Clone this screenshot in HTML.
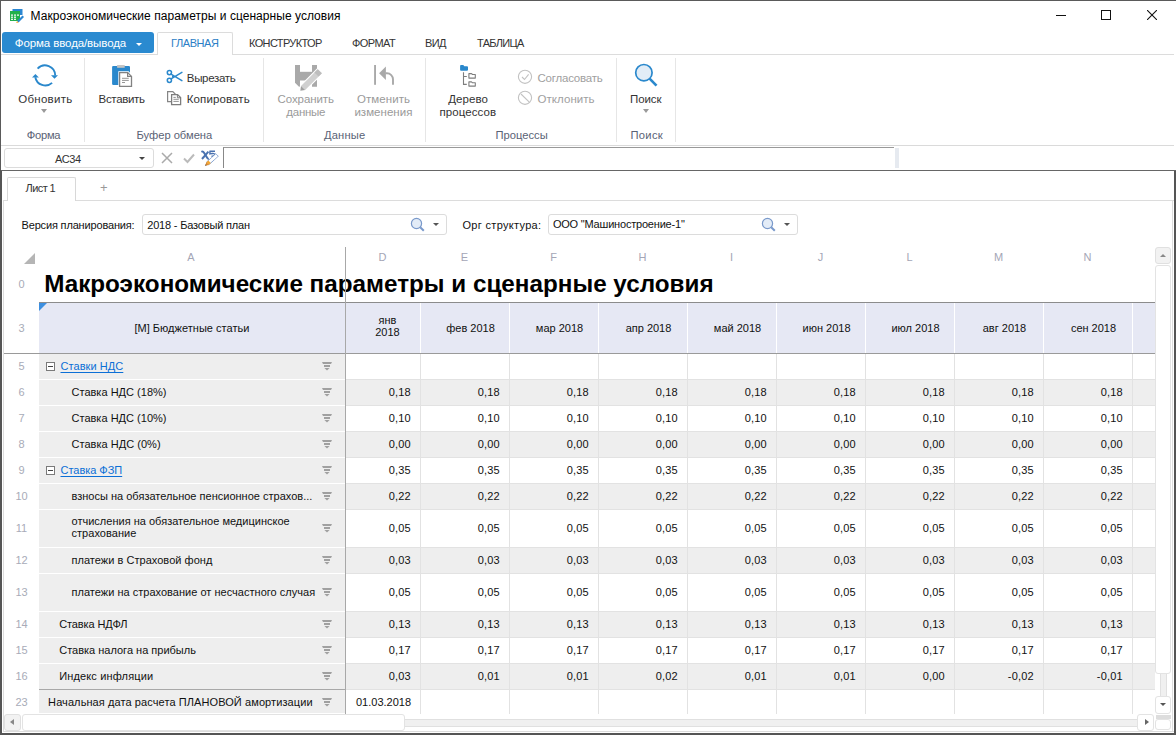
<!DOCTYPE html><html><head><meta charset="utf-8"><style>
*{margin:0;padding:0;box-sizing:border-box}
html,body{width:1176px;height:735px;overflow:hidden;background:#fff;font-family:"Liberation Sans", sans-serif;}
.a{position:absolute}
.t{position:absolute;white-space:nowrap;line-height:1}
</style></head><body><div class="a" style="left:0;top:0;width:1176px;height:1px;background:#5a5a5a"></div>
<div class="a" style="left:0;top:0;width:1px;height:170px;background:#5a5a5a"></div>
<div class="a" style="left:0;top:170px;width:2px;height:565px;background:#555"></div>
<div class="a" style="left:1174px;top:170px;width:2px;height:565px;background:#555"></div>
<div class="a" style="left:0;top:733px;width:1176px;height:2px;background:#555"></div>
<svg class="a" style="left:9px;top:8px" width="16" height="16" viewBox="0 0 16 16">
<rect x="3.5" y="1" width="10" height="6" fill="#2a86d1"/>
<rect x="1" y="3" width="10" height="10" fill="#22b04b"/>
<rect x="2" y="6.5" width="2" height="1.2" fill="#fff"/><rect x="5" y="6.5" width="2" height="1.2" fill="#fff"/><rect x="8" y="6.5" width="2" height="1.2" fill="#fff"/>
<rect x="2" y="8.6" width="2" height="1.2" fill="#fff"/><rect x="5" y="8.6" width="2" height="1.2" fill="#fff"/>
<rect x="2" y="10.7" width="2" height="1.2" fill="#fff"/><rect x="5" y="10.7" width="2" height="1.2" fill="#fff"/>
<path d="M8 13 L13.5 7.5 L15 9 L9.5 14.5 Z" fill="#2a86d1"/>
<path d="M7.2 15 L8 13 L9.5 14.5 Z" fill="#f5a623"/>
</svg>
<div class="t" style="left:30.60px;top:10px;font-size:12px;font-weight:normal;letter-spacing:0.044px;color:#000;">Макроэкономические параметры и сценарные условия</div>
<div class="a" style="left:1056px;top:15px;width:10px;height:1px;background:#111"></div>
<div class="a" style="left:1101px;top:10px;width:10px;height:10px;border:1px solid #111"></div>
<svg class="a" style="left:1147px;top:10px" width="10" height="10" viewBox="0 0 10 10"><path d="M0 0L10 10M10 0L0 10" stroke="#111" stroke-width="1.1"/></svg>
<div class="a" style="left:2px;top:32px;width:152px;height:21px;background:#2a8ad0;border-radius:3px"></div>
<div class="t" style="left:14.80px;top:38px;font-size:11.5px;font-weight:normal;letter-spacing:-0.104px;color:#fff;">Форма ввода/вывода</div>
<div class="a" style="left:136px;top:43px;width:0;height:0;border-left:3px solid transparent;border-right:3px solid transparent;border-top:3px solid #fff"></div>
<div class="a" style="left:1px;top:54px;width:1173px;height:1px;background:#dcdcdc"></div>
<div class="a" style="left:157px;top:32px;width:76px;height:23px;border:1px solid #dcdcdc;border-bottom:none;background:#fff;border-radius:2px 2px 0 0"></div>
<div class="t" style="left:171.00px;top:38px;font-size:11px;font-weight:normal;letter-spacing:-0.419px;color:#2b7ec6;">ГЛАВНАЯ</div>
<div class="t" style="left:249.00px;top:38px;font-size:11px;font-weight:normal;letter-spacing:-0.635px;color:#333;">КОНСТРУКТОР</div>
<div class="t" style="left:352.00px;top:38px;font-size:11px;font-weight:normal;letter-spacing:-0.555px;color:#333;">ФОРМАТ</div>
<div class="t" style="left:425.00px;top:38px;font-size:11px;font-weight:normal;letter-spacing:-0.622px;color:#333;">ВИД</div>
<div class="t" style="left:477.00px;top:38px;font-size:11px;font-weight:normal;letter-spacing:-0.695px;color:#333;">ТАБЛИЦА</div>
<div class="a" style="left:84px;top:58px;width:1px;height:84px;background:#e6e6e6"></div>
<div class="a" style="left:263px;top:58px;width:1px;height:84px;background:#e6e6e6"></div>
<div class="a" style="left:425px;top:58px;width:1px;height:84px;background:#e6e6e6"></div>
<div class="a" style="left:616px;top:58px;width:1px;height:84px;background:#e6e6e6"></div>
<div class="a" style="left:675px;top:58px;width:1px;height:84px;background:#e6e6e6"></div>
<div class="a" style="left:1px;top:145px;width:1173px;height:1px;background:#dadada"></div>
<svg class="a" style="left:26px;top:60px" width="40" height="32" viewBox="0 0 40 32">
<path d="M11.6 8.6 A10.2 10.2 0 0 1 29.2 15.6" fill="none" stroke="#2a88cc" stroke-width="1.9"/>
<path d="M26.1 22.9 A10.2 10.2 0 0 1 9.3 17.2" fill="none" stroke="#2a88cc" stroke-width="1.9"/>
<path d="M25 15.2 H32 L28.5 18.8 Z" fill="#2a88cc"/>
<path d="M6 17.6 H12.9 L9.4 13.9 Z" fill="#2a88cc"/>
</svg>
<div class="t" style="left:18.30px;top:94px;font-size:11.5px;font-weight:normal;letter-spacing:0.260px;color:#333;">Обновить</div>
<div class="a" style="left:41px;top:109px;width:0;height:0;border-left:3.5px solid transparent;border-right:3.5px solid transparent;border-top:4px solid #9a9a9a"></div>
<div class="t" style="left:26.80px;top:130px;font-size:11.2px;font-weight:normal;letter-spacing:-0.285px;color:#596275;">Форма</div>
<svg class="a" style="left:106px;top:60px" width="30" height="30" viewBox="0 0 30 30">
<rect x="6.1" y="5.9" width="17.9" height="19.1" rx="1.2" fill="#2a88cc"/>
<rect x="11.1" y="5" width="7.6" height="2.8" fill="#c4c4c4"/>
<path d="M12.3 11.3 H22.6 L26.7 15.4 V27.5 H12.3 Z" fill="#fff"/>
<path d="M13.6 12.6 H21.7 L25.5 16.4 V26.3 H13.6 Z" fill="#fff" stroke="#828282" stroke-width="1.3"/>
<path d="M21.6 12.6 V16.4 H25.5" fill="none" stroke="#828282" stroke-width="1.2"/>
<path d="M16 18.3 H22.8 M16 20.4 H22.8 M16 22.5 H19" stroke="#8a8a8a" stroke-width="0.9"/>
</svg>
<div class="t" style="left:98.60px;top:94px;font-size:11.5px;font-weight:normal;letter-spacing:-0.336px;color:#333;">Вставить</div>
<svg class="a" style="left:162px;top:66px" width="24" height="20" viewBox="0 0 24 20">
<circle cx="7.4" cy="6.6" r="2.1" fill="none" stroke="#2a88cc" stroke-width="1.5"/>
<circle cx="7.4" cy="14.3" r="2.1" fill="none" stroke="#2a88cc" stroke-width="1.5"/>
<path d="M9 8.1 L19.9 14.6 M9 12.8 L19.9 6.3" stroke="#2a88cc" stroke-width="1.5" stroke-linecap="round"/><path d="M10 9.2 L12.6 10.45 L10 11.7 Z" fill="#2a88cc"/>
</svg>
<div class="t" style="left:186.80px;top:73px;font-size:11.5px;font-weight:normal;letter-spacing:-0.308px;color:#333;">Вырезать</div>
<svg class="a" style="left:162px;top:88px" width="22" height="20" viewBox="0 0 22 20">
<path d="M5.6 3.6 H10.8 L13.2 6 V13.6 H5.6 Z" fill="#fff" stroke="#858585" stroke-width="1.2"/>
<path d="M9.6 6.6 H15.6 L18.6 9.6 V16.6 H9.6 Z" fill="#fff" stroke="#7d7d7d" stroke-width="1.3"/>
<path d="M15.4 6.6 V9.8 H18.6" fill="none" stroke="#7d7d7d" stroke-width="1"/>
<path d="M11.4 9.4 H13.8 M11.4 11.3 H16.8 M11.4 13.4 H16.8" stroke="#858585" stroke-width="0.9"/>
</svg>
<div class="t" style="left:186.80px;top:94px;font-size:11.5px;font-weight:normal;letter-spacing:0.108px;color:#333;">Копировать</div>
<div class="t" style="left:136.50px;top:130px;font-size:11.2px;font-weight:normal;letter-spacing:-0.027px;color:#596275;">Буфер обмена</div>
<svg class="a" style="left:290px;top:60px" width="40" height="35" viewBox="0 0 40 35">
<path d="M5 5 H27 V26.7 H9 L5 22.7 Z" fill="#a9a9a9"/>
<rect x="10" y="5" width="12" height="6.8" fill="#fff"/>
<rect x="10" y="20.5" width="12" height="6.5" fill="#fff"/>
<path d="M10.3 30.8 L11 26 L27.7 9.2 L31.9 13.2 L15.2 30 Z" fill="#fff" stroke="#fff" stroke-width="2.2" stroke-linejoin="round"/>
<path d="M11 26 L27.7 9.2 L31.9 13.2 L15.2 30 Z" fill="#d0d0d0"/>
<path d="M24.4 12.5 L27.7 9.2 L31.9 13.2 L28.6 16.5 Z" fill="#bdbdbd"/>
<path d="M10.3 30.8 L11 26 L15.2 30 Z" fill="#a0a0a0"/>
</svg>
<div class="t" style="left:277.50px;top:94px;font-size:11.5px;font-weight:normal;letter-spacing:-0.082px;color:#9a9a9a;">Сохранить</div>
<div class="t" style="left:286.30px;top:107px;font-size:11.5px;font-weight:normal;letter-spacing:-0.255px;color:#9a9a9a;">данные</div>
<div class="t" style="left:324.00px;top:130px;font-size:11.2px;font-weight:normal;letter-spacing:0.161px;color:#596275;">Данные</div>
<svg class="a" style="left:366px;top:60px" width="32" height="28" viewBox="0 0 32 28">
<rect x="8.1" y="5" width="1.9" height="19.8" fill="#a9a9a9"/>
<path d="M13.1 13.3 L19.9 6.5 V20 Z" fill="#a9a9a9"/>
<path d="M19.5 13.3 H21 A6 6 0 0 1 27 19.3 V24.8" fill="none" stroke="#a9a9a9" stroke-width="1.9"/>
</svg>
<div class="t" style="left:357.00px;top:94px;font-size:11.5px;font-weight:normal;letter-spacing:0.078px;color:#9a9a9a;">Отменить</div>
<div class="t" style="left:354.40px;top:107px;font-size:11.5px;font-weight:normal;letter-spacing:0.035px;color:#9a9a9a;">изменения</div>
<svg class="a" style="left:452px;top:60px" width="30" height="30" viewBox="0 0 30 30">
<path d="M8.1 6 Q8.1 5 9 5 H11.3 L12.3 6.2 H15 Q16 6.2 16 7.2 V9.8 Q16 10.7 15 10.7 H9 Q8.1 10.7 8.1 9.8 Z" fill="#2a88cc"/>
<path d="M11.5 12.2 V24.4 H14.8 M11.5 16.5 H14.8" fill="none" stroke="#7d7d7d" stroke-width="1.1"/>
<path d="M16.9 13.6 H19.5 L20.5 14.5 H23.3 V18.1 H16.9 Z" fill="#fff" stroke="#7d7d7d" stroke-width="1.1" stroke-linejoin="round"/>
<path d="M16.9 21.9 H19.5 L20.5 22.8 H23.3 V26.1 H16.9 Z" fill="#fff" stroke="#7d7d7d" stroke-width="1.1" stroke-linejoin="round"/>
</svg>
<div class="t" style="left:448.30px;top:94px;font-size:11.5px;font-weight:normal;letter-spacing:0.029px;color:#333;">Дерево</div>
<div class="t" style="left:439.40px;top:107px;font-size:11.5px;font-weight:normal;letter-spacing:0.075px;color:#333;">процессов</div>
<svg class="a" style="left:517px;top:69px" width="16" height="16" viewBox="0 0 16 16"><circle cx="8" cy="7.8" r="6.6" fill="none" stroke="#c2c2c2" stroke-width="1.1"/><path d="M5 8 L7.5 10.5 L11.6 5.3" fill="none" stroke="#c2c2c2" stroke-width="1.1"/></svg>
<div class="t" style="left:537.50px;top:73px;font-size:11.5px;font-weight:normal;letter-spacing:-0.211px;color:#a0a0a0;">Согласовать</div>
<svg class="a" style="left:517px;top:90px" width="16" height="16" viewBox="0 0 16 16"><circle cx="8" cy="7.8" r="6.6" fill="none" stroke="#c2c2c2" stroke-width="1.1"/><path d="M4 4 L12.3 12.1" stroke="#c2c2c2" stroke-width="1.1"/></svg>
<div class="t" style="left:537.50px;top:94px;font-size:11.5px;font-weight:normal;letter-spacing:0.056px;color:#a0a0a0;">Отклонить</div>
<div class="t" style="left:495.60px;top:130px;font-size:11.2px;font-weight:normal;letter-spacing:-0.011px;color:#596275;">Процессы</div>
<svg class="a" style="left:628px;top:58px" width="32" height="32" viewBox="0 0 32 32">
<circle cx="15.9" cy="14.7" r="8.2" fill="#e2edf7" stroke="#2a88cc" stroke-width="1.7"/>
<path d="M21.6 20.6 L28.5 27.6" stroke="#2a88cc" stroke-width="2.6"/>
</svg>
<div class="t" style="left:630.00px;top:94px;font-size:11.5px;font-weight:normal;letter-spacing:-0.084px;color:#333;">Поиск</div>
<div class="a" style="left:643px;top:109px;width:0;height:0;border-left:3.5px solid transparent;border-right:3.5px solid transparent;border-top:4px solid #9a9a9a"></div>
<div class="t" style="left:630.50px;top:130px;font-size:11.2px;font-weight:normal;letter-spacing:0.299px;color:#596275;">Поиск</div>
<div class="a" style="left:4px;top:148px;width:150px;height:20px;border:1px solid #dcdcdc;border-radius:3px;background:#fff"></div>
<div class="t" style="left:55.00px;top:154px;font-size:11px;font-weight:normal;letter-spacing:-0.466px;color:#333;">AC34</div>
<div class="a" style="left:139px;top:157px;width:0;height:0;border-left:3.5px solid transparent;border-right:3.5px solid transparent;border-top:3.5px solid #444"></div>
<svg class="a" style="left:161px;top:152px" width="12" height="12" viewBox="0 0 12 12"><path d="M1 1L11 11M11 1L1 11" stroke="#aaa" stroke-width="1.5"/></svg>
<svg class="a" style="left:183px;top:152px" width="12" height="12" viewBox="0 0 12 12"><path d="M1 6.5L4.5 10L11 2.5" fill="none" stroke="#bbb" stroke-width="2"/></svg>
<svg class="a" style="left:196px;top:146px" width="26" height="24" viewBox="0 0 26 24">
<path d="M5.4 5.8 Q7 5 8.2 7 L11 11.6 Q11.8 13 12.9 12.6" fill="none" stroke="#4a72b0" stroke-width="2"/>
<path d="M12.4 5.6 L6 13" stroke="#4a72b0" stroke-width="2"/>
<path d="M13.4 5.3 H19 M13.9 5.3 V7.8 Q19.2 6.8 19 9 Q18.6 10.4 15.5 10.2" fill="none" stroke="#4a72b0" stroke-width="1.4"/>
<path d="M12.7 18.9 L10.3 16.3 L19.8 7.7 L22.2 10.3 Z" fill="#fff" stroke="#4a76ba" stroke-width="0.9" stroke-dasharray="1 0.5"/>
<path d="M12.7 18.9 L10.3 16.3 L12.4 14.4 L14.8 17 Z" fill="#f5a631"/>
<path d="M9.2 19.7 L10.3 16.3 L12.7 18.9 Z" fill="#e08a2a"/>
<path d="M9.1 19.8 L9.6 18.3 L10.7 19.3 Z" fill="#444"/>
</svg>
<div class="a" style="left:223px;top:147px;width:671px;height:21px;border-left:1px solid #888;border-top:1px solid #999;background:#fff"></div>
<div class="a" style="left:895px;top:148px;width:4px;height:20px;background:#e6eaf0"></div>
<div class="a" style="left:1px;top:170px;width:1175px;height:1px;background:#666"></div>
<div class="a" style="left:3px;top:200px;width:1171px;height:1px;background:#dcdcdc"></div>
<div class="a" style="left:7px;top:177px;width:69px;height:24px;border:1px solid #d8d8d8;border-bottom:none;background:#fff;border-radius:2px 2px 0 0"></div>
<div class="t" style="left:25.50px;top:183px;font-size:11px;font-weight:normal;letter-spacing:-0.572px;color:#333;">Лист 1</div>
<div class="t" style="left:100px;top:181px;font-size:13px;color:#999">+</div>
<div class="a" style="left:3px;top:200px;width:1px;height:532px;background:#dcdcdc"></div>
<div class="a" style="left:3px;top:731px;width:1171px;height:1px;background:#dcdcdc"></div>
<div class="a" style="left:1172px;top:200px;width:1px;height:532px;background:#dcdcdc"></div>
<div class="t" style="left:21.50px;top:220px;font-size:11px;font-weight:normal;letter-spacing:-0.163px;color:#111;">Версия планирования:</div>
<div class="a" style="left:142px;top:214px;width:305px;height:21px;border:1px solid #dcdcdc;border-radius:3px;background:#fff"></div>
<div class="t" style="left:147.20px;top:220px;font-size:11px;font-weight:normal;letter-spacing:-0.174px;color:#111;">2018 - Базовый план</div>
<svg class="a" style="left:410px;top:217px" width="16" height="16" viewBox="0 0 16 16"><circle cx="6.5" cy="6.5" r="5.1" fill="#e3ecf7" stroke="#7a9acb" stroke-width="1.2"/><path d="M10.2 10.2 L13.8 13.8" stroke="#7a9acb" stroke-width="2"/></svg>
<div class="a" style="left:433px;top:223px;width:0;height:0;border-left:3px solid transparent;border-right:3px solid transparent;border-top:3px solid #555"></div>
<div class="t" style="left:462.50px;top:220px;font-size:11px;font-weight:normal;letter-spacing:0.309px;color:#111;">Орг структура:</div>
<div class="a" style="left:548px;top:214px;width:250px;height:21px;border:1px solid #dcdcdc;border-radius:3px;background:#fff"></div>
<div class="t" style="left:552.90px;top:219px;font-size:11px;font-weight:normal;letter-spacing:-0.200px;color:#111;">ООО &quot;Машиностроение-1&quot;</div>
<svg class="a" style="left:761px;top:217px" width="16" height="16" viewBox="0 0 16 16"><circle cx="6.5" cy="6.5" r="5.1" fill="#e3ecf7" stroke="#7a9acb" stroke-width="1.2"/><path d="M10.2 10.2 L13.8 13.8" stroke="#7a9acb" stroke-width="2"/></svg>
<div class="a" style="left:784px;top:223px;width:0;height:0;border-left:3px solid transparent;border-right:3px solid transparent;border-top:3px solid #555"></div>
<div class="a" style="left:24px;top:253px;width:0;height:0;border-left:11px solid transparent;border-bottom:11px solid #b5b5b5"></div>
<div class="t" style="left:38px;width:306px;text-align:center;top:252px;font-size:11px;color:#a4a6b6">A</div>
<div class="t" style="left:345px;width:75px;text-align:center;top:252px;font-size:11px;color:#a4a6b6">D</div>
<div class="t" style="left:420px;width:89px;text-align:center;top:252px;font-size:11px;color:#a4a6b6">E</div>
<div class="t" style="left:509px;width:89px;text-align:center;top:252px;font-size:11px;color:#a4a6b6">F</div>
<div class="t" style="left:598px;width:89px;text-align:center;top:252px;font-size:11px;color:#a4a6b6">H</div>
<div class="t" style="left:687px;width:89px;text-align:center;top:252px;font-size:11px;color:#a4a6b6">I</div>
<div class="t" style="left:776px;width:89px;text-align:center;top:252px;font-size:11px;color:#a4a6b6">J</div>
<div class="t" style="left:865px;width:89px;text-align:center;top:252px;font-size:11px;color:#a4a6b6">L</div>
<div class="t" style="left:954px;width:89px;text-align:center;top:252px;font-size:11px;color:#a4a6b6">M</div>
<div class="t" style="left:1043px;width:89px;text-align:center;top:252px;font-size:11px;color:#a4a6b6">N</div>
<div class="t" style="left:4px;width:35px;text-align:center;top:279px;font-size:11px;color:#a8abb8">0</div>
<div class="t" style="left:44.2px;top:271.5px;font-size:24.25px;font-weight:bold;color:#000">Макроэкономические параметры и сценарные условия</div>
<div class="a" style="left:39px;top:303px;width:1116px;height:50px;background:#e6e8f4"></div>
<div class="a" style="left:39px;top:302px;width:1116px;height:1px;background:#8c8c8c"></div>
<div class="a" style="left:4px;top:353px;width:1151px;height:1px;background:#9a9a9a"></div>
<div class="a" style="left:39px;top:303px;width:0;height:0;border-right:8px solid transparent;border-top:8px solid #3d8fe0"></div>
<div class="t" style="left:4px;width:35px;text-align:center;top:323px;font-size:11px;color:#a8abb8">3</div>
<div class="t" style="left:134.40px;top:323px;font-size:11px;font-weight:normal;letter-spacing:0.029px;color:#111;">[M] Бюджетные статьи</div>
<div class="a" style="left:420px;top:303px;width:1px;height:50px;background:#fff"></div>
<div class="t" style="left:346px;width:83px;text-align:center;top:314px;font-size:11px;line-height:12px;color:#111">янв<br>2018</div>
<div class="a" style="left:509px;top:303px;width:1px;height:50px;background:#fff"></div>
<div class="t" style="left:422px;width:97px;text-align:center;top:323px;font-size:11px;color:#111">фев 2018</div>
<div class="a" style="left:598px;top:303px;width:1px;height:50px;background:#fff"></div>
<div class="t" style="left:511px;width:97px;text-align:center;top:323px;font-size:11px;color:#111">мар 2018</div>
<div class="a" style="left:687px;top:303px;width:1px;height:50px;background:#fff"></div>
<div class="t" style="left:600px;width:97px;text-align:center;top:323px;font-size:11px;color:#111">апр 2018</div>
<div class="a" style="left:776px;top:303px;width:1px;height:50px;background:#fff"></div>
<div class="t" style="left:689px;width:97px;text-align:center;top:323px;font-size:11px;color:#111">май 2018</div>
<div class="a" style="left:865px;top:303px;width:1px;height:50px;background:#fff"></div>
<div class="t" style="left:778px;width:97px;text-align:center;top:323px;font-size:11px;color:#111">июн 2018</div>
<div class="a" style="left:954px;top:303px;width:1px;height:50px;background:#fff"></div>
<div class="t" style="left:867px;width:97px;text-align:center;top:323px;font-size:11px;color:#111">июл 2018</div>
<div class="a" style="left:1043px;top:303px;width:1px;height:50px;background:#fff"></div>
<div class="t" style="left:956px;width:97px;text-align:center;top:323px;font-size:11px;color:#111">авг 2018</div>
<div class="a" style="left:1132px;top:303px;width:1px;height:50px;background:#fff"></div>
<div class="t" style="left:1045px;width:97px;text-align:center;top:323px;font-size:11px;color:#111">сен 2018</div>
<div class="a" style="left:39px;top:354px;width:306px;height:25px;background:#eeeeee"></div>
<div class="a" style="left:39px;top:379px;width:306px;height:1px;background:#fff"></div>
<div class="a" style="left:346px;top:379px;width:809px;height:1px;background:#e2e2e2"></div>
<div class="t" style="left:4px;width:35px;text-align:center;top:361px;font-size:11px;color:#a8abb8">5</div>
<svg class="a" style="left:322px;top:362px" width="10" height="9" viewBox="0 0 10 9"><path d="M0 0H10L9 2H1Z" fill="#a0a0a0"/><rect x="2" y="3" width="6" height="2" fill="#a0a0a0"/><path d="M2.4 6H7.6L5 8.4Z" fill="#a0a0a0"/></svg>
<div class="a" style="left:46px;top:362px;width:9px;height:9px;border:1px solid #7a7a7a;background:#fff"></div>
<div class="a" style="left:48px;top:366px;width:5px;height:1px;background:#444"></div>
<div class="t" style="left:60.50px;top:361px;font-size:11px;font-weight:normal;letter-spacing:0.064px;color:#0b6fd6;text-decoration:underline;text-underline-offset:2px">Ставки НДС</div>
<div class="a" style="left:39px;top:380px;width:306px;height:25px;background:#eeeeee"></div>
<div class="a" style="left:346px;top:380px;width:809px;height:25px;background:#eeeeee"></div>
<div class="a" style="left:39px;top:405px;width:306px;height:1px;background:#fff"></div>
<div class="a" style="left:346px;top:405px;width:809px;height:1px;background:#e2e2e2"></div>
<div class="t" style="left:4px;width:35px;text-align:center;top:387px;font-size:11px;color:#a8abb8">6</div>
<svg class="a" style="left:322px;top:388px" width="10" height="9" viewBox="0 0 10 9"><path d="M0 0H10L9 2H1Z" fill="#a0a0a0"/><rect x="2" y="3" width="6" height="2" fill="#a0a0a0"/><path d="M2.4 6H7.6L5 8.4Z" fill="#a0a0a0"/></svg>
<div class="t" style="left:71.50px;top:387px;font-size:11px;font-weight:normal;letter-spacing:0.012px;color:#111;">Ставка НДС (18%)</div>
<div class="t" style="left:310px;width:100.7px;text-align:right;top:387px;font-size:11px;letter-spacing:0.15px;color:#111">0,18</div>
<div class="t" style="left:399px;width:100.7px;text-align:right;top:387px;font-size:11px;letter-spacing:0.15px;color:#111">0,18</div>
<div class="t" style="left:488px;width:100.7px;text-align:right;top:387px;font-size:11px;letter-spacing:0.15px;color:#111">0,18</div>
<div class="t" style="left:577px;width:100.7px;text-align:right;top:387px;font-size:11px;letter-spacing:0.15px;color:#111">0,18</div>
<div class="t" style="left:666px;width:100.7px;text-align:right;top:387px;font-size:11px;letter-spacing:0.15px;color:#111">0,18</div>
<div class="t" style="left:755px;width:100.7px;text-align:right;top:387px;font-size:11px;letter-spacing:0.15px;color:#111">0,18</div>
<div class="t" style="left:844px;width:100.7px;text-align:right;top:387px;font-size:11px;letter-spacing:0.15px;color:#111">0,18</div>
<div class="t" style="left:933px;width:100.7px;text-align:right;top:387px;font-size:11px;letter-spacing:0.15px;color:#111">0,18</div>
<div class="t" style="left:1022px;width:100.7px;text-align:right;top:387px;font-size:11px;letter-spacing:0.15px;color:#111">0,18</div>
<div class="a" style="left:39px;top:406px;width:306px;height:25px;background:#eeeeee"></div>
<div class="a" style="left:39px;top:431px;width:306px;height:1px;background:#fff"></div>
<div class="a" style="left:346px;top:431px;width:809px;height:1px;background:#e2e2e2"></div>
<div class="t" style="left:4px;width:35px;text-align:center;top:413px;font-size:11px;color:#a8abb8">7</div>
<svg class="a" style="left:322px;top:414px" width="10" height="9" viewBox="0 0 10 9"><path d="M0 0H10L9 2H1Z" fill="#a0a0a0"/><rect x="2" y="3" width="6" height="2" fill="#a0a0a0"/><path d="M2.4 6H7.6L5 8.4Z" fill="#a0a0a0"/></svg>
<div class="t" style="left:71.50px;top:413px;font-size:11px;font-weight:normal;letter-spacing:0.012px;color:#111;">Ставка НДС (10%)</div>
<div class="t" style="left:310px;width:100.7px;text-align:right;top:413px;font-size:11px;letter-spacing:0.15px;color:#111">0,10</div>
<div class="t" style="left:399px;width:100.7px;text-align:right;top:413px;font-size:11px;letter-spacing:0.15px;color:#111">0,10</div>
<div class="t" style="left:488px;width:100.7px;text-align:right;top:413px;font-size:11px;letter-spacing:0.15px;color:#111">0,10</div>
<div class="t" style="left:577px;width:100.7px;text-align:right;top:413px;font-size:11px;letter-spacing:0.15px;color:#111">0,10</div>
<div class="t" style="left:666px;width:100.7px;text-align:right;top:413px;font-size:11px;letter-spacing:0.15px;color:#111">0,10</div>
<div class="t" style="left:755px;width:100.7px;text-align:right;top:413px;font-size:11px;letter-spacing:0.15px;color:#111">0,10</div>
<div class="t" style="left:844px;width:100.7px;text-align:right;top:413px;font-size:11px;letter-spacing:0.15px;color:#111">0,10</div>
<div class="t" style="left:933px;width:100.7px;text-align:right;top:413px;font-size:11px;letter-spacing:0.15px;color:#111">0,10</div>
<div class="t" style="left:1022px;width:100.7px;text-align:right;top:413px;font-size:11px;letter-spacing:0.15px;color:#111">0,10</div>
<div class="a" style="left:39px;top:432px;width:306px;height:25px;background:#eeeeee"></div>
<div class="a" style="left:346px;top:432px;width:809px;height:25px;background:#eeeeee"></div>
<div class="a" style="left:39px;top:457px;width:306px;height:1px;background:#fff"></div>
<div class="a" style="left:346px;top:457px;width:809px;height:1px;background:#e2e2e2"></div>
<div class="t" style="left:4px;width:35px;text-align:center;top:439px;font-size:11px;color:#a8abb8">8</div>
<svg class="a" style="left:322px;top:440px" width="10" height="9" viewBox="0 0 10 9"><path d="M0 0H10L9 2H1Z" fill="#a0a0a0"/><rect x="2" y="3" width="6" height="2" fill="#a0a0a0"/><path d="M2.4 6H7.6L5 8.4Z" fill="#a0a0a0"/></svg>
<div class="t" style="left:71.50px;top:439px;font-size:11px;font-weight:normal;letter-spacing:0.028px;color:#111;">Ставка НДС (0%)</div>
<div class="t" style="left:310px;width:100.7px;text-align:right;top:439px;font-size:11px;letter-spacing:0.15px;color:#111">0,00</div>
<div class="t" style="left:399px;width:100.7px;text-align:right;top:439px;font-size:11px;letter-spacing:0.15px;color:#111">0,00</div>
<div class="t" style="left:488px;width:100.7px;text-align:right;top:439px;font-size:11px;letter-spacing:0.15px;color:#111">0,00</div>
<div class="t" style="left:577px;width:100.7px;text-align:right;top:439px;font-size:11px;letter-spacing:0.15px;color:#111">0,00</div>
<div class="t" style="left:666px;width:100.7px;text-align:right;top:439px;font-size:11px;letter-spacing:0.15px;color:#111">0,00</div>
<div class="t" style="left:755px;width:100.7px;text-align:right;top:439px;font-size:11px;letter-spacing:0.15px;color:#111">0,00</div>
<div class="t" style="left:844px;width:100.7px;text-align:right;top:439px;font-size:11px;letter-spacing:0.15px;color:#111">0,00</div>
<div class="t" style="left:933px;width:100.7px;text-align:right;top:439px;font-size:11px;letter-spacing:0.15px;color:#111">0,00</div>
<div class="t" style="left:1022px;width:100.7px;text-align:right;top:439px;font-size:11px;letter-spacing:0.15px;color:#111">0,00</div>
<div class="a" style="left:39px;top:458px;width:306px;height:25px;background:#eeeeee"></div>
<div class="a" style="left:39px;top:483px;width:306px;height:1px;background:#fff"></div>
<div class="a" style="left:346px;top:483px;width:809px;height:1px;background:#e2e2e2"></div>
<div class="t" style="left:4px;width:35px;text-align:center;top:465px;font-size:11px;color:#a8abb8">9</div>
<svg class="a" style="left:322px;top:466px" width="10" height="9" viewBox="0 0 10 9"><path d="M0 0H10L9 2H1Z" fill="#a0a0a0"/><rect x="2" y="3" width="6" height="2" fill="#a0a0a0"/><path d="M2.4 6H7.6L5 8.4Z" fill="#a0a0a0"/></svg>
<div class="a" style="left:46px;top:466px;width:9px;height:9px;border:1px solid #7a7a7a;background:#fff"></div>
<div class="a" style="left:48px;top:470px;width:5px;height:1px;background:#444"></div>
<div class="t" style="left:60.50px;top:465px;font-size:11px;font-weight:normal;letter-spacing:-0.028px;color:#0b6fd6;text-decoration:underline;text-underline-offset:2px">Ставка ФЗП</div>
<div class="t" style="left:310px;width:100.7px;text-align:right;top:465px;font-size:11px;letter-spacing:0.15px;color:#111">0,35</div>
<div class="t" style="left:399px;width:100.7px;text-align:right;top:465px;font-size:11px;letter-spacing:0.15px;color:#111">0,35</div>
<div class="t" style="left:488px;width:100.7px;text-align:right;top:465px;font-size:11px;letter-spacing:0.15px;color:#111">0,35</div>
<div class="t" style="left:577px;width:100.7px;text-align:right;top:465px;font-size:11px;letter-spacing:0.15px;color:#111">0,35</div>
<div class="t" style="left:666px;width:100.7px;text-align:right;top:465px;font-size:11px;letter-spacing:0.15px;color:#111">0,35</div>
<div class="t" style="left:755px;width:100.7px;text-align:right;top:465px;font-size:11px;letter-spacing:0.15px;color:#111">0,35</div>
<div class="t" style="left:844px;width:100.7px;text-align:right;top:465px;font-size:11px;letter-spacing:0.15px;color:#111">0,35</div>
<div class="t" style="left:933px;width:100.7px;text-align:right;top:465px;font-size:11px;letter-spacing:0.15px;color:#111">0,35</div>
<div class="t" style="left:1022px;width:100.7px;text-align:right;top:465px;font-size:11px;letter-spacing:0.15px;color:#111">0,35</div>
<div class="a" style="left:39px;top:484px;width:306px;height:25px;background:#eeeeee"></div>
<div class="a" style="left:346px;top:484px;width:809px;height:25px;background:#eeeeee"></div>
<div class="a" style="left:39px;top:509px;width:306px;height:1px;background:#fff"></div>
<div class="a" style="left:346px;top:509px;width:809px;height:1px;background:#e2e2e2"></div>
<div class="t" style="left:4px;width:35px;text-align:center;top:491px;font-size:11px;color:#a8abb8">10</div>
<svg class="a" style="left:322px;top:492px" width="10" height="9" viewBox="0 0 10 9"><path d="M0 0H10L9 2H1Z" fill="#a0a0a0"/><rect x="2" y="3" width="6" height="2" fill="#a0a0a0"/><path d="M2.4 6H7.6L5 8.4Z" fill="#a0a0a0"/></svg>
<div class="t" style="left:71.50px;top:491px;font-size:11px;font-weight:normal;letter-spacing:0.007px;color:#111;">взносы на обязательное пенсионное страхов...</div>
<div class="t" style="left:310px;width:100.7px;text-align:right;top:491px;font-size:11px;letter-spacing:0.15px;color:#111">0,22</div>
<div class="t" style="left:399px;width:100.7px;text-align:right;top:491px;font-size:11px;letter-spacing:0.15px;color:#111">0,22</div>
<div class="t" style="left:488px;width:100.7px;text-align:right;top:491px;font-size:11px;letter-spacing:0.15px;color:#111">0,22</div>
<div class="t" style="left:577px;width:100.7px;text-align:right;top:491px;font-size:11px;letter-spacing:0.15px;color:#111">0,22</div>
<div class="t" style="left:666px;width:100.7px;text-align:right;top:491px;font-size:11px;letter-spacing:0.15px;color:#111">0,22</div>
<div class="t" style="left:755px;width:100.7px;text-align:right;top:491px;font-size:11px;letter-spacing:0.15px;color:#111">0,22</div>
<div class="t" style="left:844px;width:100.7px;text-align:right;top:491px;font-size:11px;letter-spacing:0.15px;color:#111">0,22</div>
<div class="t" style="left:933px;width:100.7px;text-align:right;top:491px;font-size:11px;letter-spacing:0.15px;color:#111">0,22</div>
<div class="t" style="left:1022px;width:100.7px;text-align:right;top:491px;font-size:11px;letter-spacing:0.15px;color:#111">0,22</div>
<div class="a" style="left:39px;top:510px;width:306px;height:37px;background:#eeeeee"></div>
<div class="a" style="left:39px;top:547px;width:306px;height:1px;background:#fff"></div>
<div class="a" style="left:346px;top:547px;width:809px;height:1px;background:#e2e2e2"></div>
<div class="t" style="left:4px;width:35px;text-align:center;top:523px;font-size:11px;color:#a8abb8">11</div>
<svg class="a" style="left:322px;top:524px" width="10" height="9" viewBox="0 0 10 9"><path d="M0 0H10L9 2H1Z" fill="#a0a0a0"/><rect x="2" y="3" width="6" height="2" fill="#a0a0a0"/><path d="M2.4 6H7.6L5 8.4Z" fill="#a0a0a0"/></svg>
<div class="t" style="left:71.50px;top:516px;font-size:11px;font-weight:normal;letter-spacing:0.013px;color:#111;">отчисления на обязательное медицинское</div>
<div class="t" style="left:71.50px;top:528px;font-size:11px;font-weight:normal;letter-spacing:0.038px;color:#111;">страхование</div>
<div class="t" style="left:310px;width:100.7px;text-align:right;top:523px;font-size:11px;letter-spacing:0.15px;color:#111">0,05</div>
<div class="t" style="left:399px;width:100.7px;text-align:right;top:523px;font-size:11px;letter-spacing:0.15px;color:#111">0,05</div>
<div class="t" style="left:488px;width:100.7px;text-align:right;top:523px;font-size:11px;letter-spacing:0.15px;color:#111">0,05</div>
<div class="t" style="left:577px;width:100.7px;text-align:right;top:523px;font-size:11px;letter-spacing:0.15px;color:#111">0,05</div>
<div class="t" style="left:666px;width:100.7px;text-align:right;top:523px;font-size:11px;letter-spacing:0.15px;color:#111">0,05</div>
<div class="t" style="left:755px;width:100.7px;text-align:right;top:523px;font-size:11px;letter-spacing:0.15px;color:#111">0,05</div>
<div class="t" style="left:844px;width:100.7px;text-align:right;top:523px;font-size:11px;letter-spacing:0.15px;color:#111">0,05</div>
<div class="t" style="left:933px;width:100.7px;text-align:right;top:523px;font-size:11px;letter-spacing:0.15px;color:#111">0,05</div>
<div class="t" style="left:1022px;width:100.7px;text-align:right;top:523px;font-size:11px;letter-spacing:0.15px;color:#111">0,05</div>
<div class="a" style="left:39px;top:548px;width:306px;height:25px;background:#eeeeee"></div>
<div class="a" style="left:346px;top:548px;width:809px;height:25px;background:#eeeeee"></div>
<div class="a" style="left:39px;top:573px;width:306px;height:1px;background:#fff"></div>
<div class="a" style="left:346px;top:573px;width:809px;height:1px;background:#e2e2e2"></div>
<div class="t" style="left:4px;width:35px;text-align:center;top:555px;font-size:11px;color:#a8abb8">12</div>
<svg class="a" style="left:322px;top:556px" width="10" height="9" viewBox="0 0 10 9"><path d="M0 0H10L9 2H1Z" fill="#a0a0a0"/><rect x="2" y="3" width="6" height="2" fill="#a0a0a0"/><path d="M2.4 6H7.6L5 8.4Z" fill="#a0a0a0"/></svg>
<div class="t" style="left:71.50px;top:555px;font-size:11px;font-weight:normal;letter-spacing:0.034px;color:#111;">платежи в Страховой фонд</div>
<div class="t" style="left:310px;width:100.7px;text-align:right;top:555px;font-size:11px;letter-spacing:0.15px;color:#111">0,03</div>
<div class="t" style="left:399px;width:100.7px;text-align:right;top:555px;font-size:11px;letter-spacing:0.15px;color:#111">0,03</div>
<div class="t" style="left:488px;width:100.7px;text-align:right;top:555px;font-size:11px;letter-spacing:0.15px;color:#111">0,03</div>
<div class="t" style="left:577px;width:100.7px;text-align:right;top:555px;font-size:11px;letter-spacing:0.15px;color:#111">0,03</div>
<div class="t" style="left:666px;width:100.7px;text-align:right;top:555px;font-size:11px;letter-spacing:0.15px;color:#111">0,03</div>
<div class="t" style="left:755px;width:100.7px;text-align:right;top:555px;font-size:11px;letter-spacing:0.15px;color:#111">0,03</div>
<div class="t" style="left:844px;width:100.7px;text-align:right;top:555px;font-size:11px;letter-spacing:0.15px;color:#111">0,03</div>
<div class="t" style="left:933px;width:100.7px;text-align:right;top:555px;font-size:11px;letter-spacing:0.15px;color:#111">0,03</div>
<div class="t" style="left:1022px;width:100.7px;text-align:right;top:555px;font-size:11px;letter-spacing:0.15px;color:#111">0,03</div>
<div class="a" style="left:39px;top:574px;width:306px;height:37px;background:#eeeeee"></div>
<div class="a" style="left:39px;top:611px;width:306px;height:1px;background:#fff"></div>
<div class="a" style="left:346px;top:611px;width:809px;height:1px;background:#e2e2e2"></div>
<div class="t" style="left:4px;width:35px;text-align:center;top:587px;font-size:11px;color:#a8abb8">13</div>
<svg class="a" style="left:322px;top:588px" width="10" height="9" viewBox="0 0 10 9"><path d="M0 0H10L9 2H1Z" fill="#a0a0a0"/><rect x="2" y="3" width="6" height="2" fill="#a0a0a0"/><path d="M2.4 6H7.6L5 8.4Z" fill="#a0a0a0"/></svg>
<div class="t" style="left:71.50px;top:587px;font-size:11px;font-weight:normal;letter-spacing:0.021px;color:#111;">платежи на страхование от несчастного случая</div>
<div class="t" style="left:310px;width:100.7px;text-align:right;top:587px;font-size:11px;letter-spacing:0.15px;color:#111">0,05</div>
<div class="t" style="left:399px;width:100.7px;text-align:right;top:587px;font-size:11px;letter-spacing:0.15px;color:#111">0,05</div>
<div class="t" style="left:488px;width:100.7px;text-align:right;top:587px;font-size:11px;letter-spacing:0.15px;color:#111">0,05</div>
<div class="t" style="left:577px;width:100.7px;text-align:right;top:587px;font-size:11px;letter-spacing:0.15px;color:#111">0,05</div>
<div class="t" style="left:666px;width:100.7px;text-align:right;top:587px;font-size:11px;letter-spacing:0.15px;color:#111">0,05</div>
<div class="t" style="left:755px;width:100.7px;text-align:right;top:587px;font-size:11px;letter-spacing:0.15px;color:#111">0,05</div>
<div class="t" style="left:844px;width:100.7px;text-align:right;top:587px;font-size:11px;letter-spacing:0.15px;color:#111">0,05</div>
<div class="t" style="left:933px;width:100.7px;text-align:right;top:587px;font-size:11px;letter-spacing:0.15px;color:#111">0,05</div>
<div class="t" style="left:1022px;width:100.7px;text-align:right;top:587px;font-size:11px;letter-spacing:0.15px;color:#111">0,05</div>
<div class="a" style="left:39px;top:612px;width:306px;height:25px;background:#eeeeee"></div>
<div class="a" style="left:346px;top:612px;width:809px;height:25px;background:#eeeeee"></div>
<div class="a" style="left:39px;top:637px;width:306px;height:1px;background:#fff"></div>
<div class="a" style="left:346px;top:637px;width:809px;height:1px;background:#e2e2e2"></div>
<div class="t" style="left:4px;width:35px;text-align:center;top:619px;font-size:11px;color:#a8abb8">14</div>
<svg class="a" style="left:322px;top:620px" width="10" height="9" viewBox="0 0 10 9"><path d="M0 0H10L9 2H1Z" fill="#a0a0a0"/><rect x="2" y="3" width="6" height="2" fill="#a0a0a0"/><path d="M2.4 6H7.6L5 8.4Z" fill="#a0a0a0"/></svg>
<div class="t" style="left:59.20px;top:619px;font-size:11px;font-weight:normal;letter-spacing:-0.110px;color:#111;">Ставка НДФЛ</div>
<div class="t" style="left:310px;width:100.7px;text-align:right;top:619px;font-size:11px;letter-spacing:0.15px;color:#111">0,13</div>
<div class="t" style="left:399px;width:100.7px;text-align:right;top:619px;font-size:11px;letter-spacing:0.15px;color:#111">0,13</div>
<div class="t" style="left:488px;width:100.7px;text-align:right;top:619px;font-size:11px;letter-spacing:0.15px;color:#111">0,13</div>
<div class="t" style="left:577px;width:100.7px;text-align:right;top:619px;font-size:11px;letter-spacing:0.15px;color:#111">0,13</div>
<div class="t" style="left:666px;width:100.7px;text-align:right;top:619px;font-size:11px;letter-spacing:0.15px;color:#111">0,13</div>
<div class="t" style="left:755px;width:100.7px;text-align:right;top:619px;font-size:11px;letter-spacing:0.15px;color:#111">0,13</div>
<div class="t" style="left:844px;width:100.7px;text-align:right;top:619px;font-size:11px;letter-spacing:0.15px;color:#111">0,13</div>
<div class="t" style="left:933px;width:100.7px;text-align:right;top:619px;font-size:11px;letter-spacing:0.15px;color:#111">0,13</div>
<div class="t" style="left:1022px;width:100.7px;text-align:right;top:619px;font-size:11px;letter-spacing:0.15px;color:#111">0,13</div>
<div class="a" style="left:39px;top:638px;width:306px;height:25px;background:#eeeeee"></div>
<div class="a" style="left:39px;top:663px;width:306px;height:1px;background:#fff"></div>
<div class="a" style="left:346px;top:663px;width:809px;height:1px;background:#e2e2e2"></div>
<div class="t" style="left:4px;width:35px;text-align:center;top:645px;font-size:11px;color:#a8abb8">15</div>
<svg class="a" style="left:322px;top:646px" width="10" height="9" viewBox="0 0 10 9"><path d="M0 0H10L9 2H1Z" fill="#a0a0a0"/><rect x="2" y="3" width="6" height="2" fill="#a0a0a0"/><path d="M2.4 6H7.6L5 8.4Z" fill="#a0a0a0"/></svg>
<div class="t" style="left:59.20px;top:645px;font-size:11px;font-weight:normal;letter-spacing:0.003px;color:#111;">Ставка налога на прибыль</div>
<div class="t" style="left:310px;width:100.7px;text-align:right;top:645px;font-size:11px;letter-spacing:0.15px;color:#111">0,17</div>
<div class="t" style="left:399px;width:100.7px;text-align:right;top:645px;font-size:11px;letter-spacing:0.15px;color:#111">0,17</div>
<div class="t" style="left:488px;width:100.7px;text-align:right;top:645px;font-size:11px;letter-spacing:0.15px;color:#111">0,17</div>
<div class="t" style="left:577px;width:100.7px;text-align:right;top:645px;font-size:11px;letter-spacing:0.15px;color:#111">0,17</div>
<div class="t" style="left:666px;width:100.7px;text-align:right;top:645px;font-size:11px;letter-spacing:0.15px;color:#111">0,17</div>
<div class="t" style="left:755px;width:100.7px;text-align:right;top:645px;font-size:11px;letter-spacing:0.15px;color:#111">0,17</div>
<div class="t" style="left:844px;width:100.7px;text-align:right;top:645px;font-size:11px;letter-spacing:0.15px;color:#111">0,17</div>
<div class="t" style="left:933px;width:100.7px;text-align:right;top:645px;font-size:11px;letter-spacing:0.15px;color:#111">0,17</div>
<div class="t" style="left:1022px;width:100.7px;text-align:right;top:645px;font-size:11px;letter-spacing:0.15px;color:#111">0,17</div>
<div class="a" style="left:39px;top:664px;width:306px;height:25px;background:#eeeeee"></div>
<div class="a" style="left:346px;top:664px;width:809px;height:25px;background:#eeeeee"></div>
<div class="a" style="left:39px;top:689px;width:306px;height:1px;background:#fff"></div>
<div class="a" style="left:346px;top:689px;width:809px;height:1px;background:#e2e2e2"></div>
<div class="t" style="left:4px;width:35px;text-align:center;top:671px;font-size:11px;color:#a8abb8">16</div>
<svg class="a" style="left:322px;top:672px" width="10" height="9" viewBox="0 0 10 9"><path d="M0 0H10L9 2H1Z" fill="#a0a0a0"/><rect x="2" y="3" width="6" height="2" fill="#a0a0a0"/><path d="M2.4 6H7.6L5 8.4Z" fill="#a0a0a0"/></svg>
<div class="t" style="left:59.20px;top:671px;font-size:11px;font-weight:normal;letter-spacing:0.139px;color:#111;">Индекс инфляции</div>
<div class="t" style="left:310px;width:100.7px;text-align:right;top:671px;font-size:11px;letter-spacing:0.15px;color:#111">0,03</div>
<div class="t" style="left:399px;width:100.7px;text-align:right;top:671px;font-size:11px;letter-spacing:0.15px;color:#111">0,01</div>
<div class="t" style="left:488px;width:100.7px;text-align:right;top:671px;font-size:11px;letter-spacing:0.15px;color:#111">0,01</div>
<div class="t" style="left:577px;width:100.7px;text-align:right;top:671px;font-size:11px;letter-spacing:0.15px;color:#111">0,02</div>
<div class="t" style="left:666px;width:100.7px;text-align:right;top:671px;font-size:11px;letter-spacing:0.15px;color:#111">0,01</div>
<div class="t" style="left:755px;width:100.7px;text-align:right;top:671px;font-size:11px;letter-spacing:0.15px;color:#111">0,01</div>
<div class="t" style="left:844px;width:100.7px;text-align:right;top:671px;font-size:11px;letter-spacing:0.15px;color:#111">0,00</div>
<div class="t" style="left:933px;width:100.7px;text-align:right;top:671px;font-size:11px;letter-spacing:0.15px;color:#111">-0,02</div>
<div class="t" style="left:1022px;width:100.7px;text-align:right;top:671px;font-size:11px;letter-spacing:0.15px;color:#111">-0,01</div>
<div class="a" style="left:39px;top:690px;width:306px;height:23px;background:#eeeeee"></div>
<div class="t" style="left:4px;width:35px;text-align:center;top:697px;font-size:11px;color:#a8abb8">23</div>
<svg class="a" style="left:322px;top:698px" width="10" height="9" viewBox="0 0 10 9"><path d="M0 0H10L9 2H1Z" fill="#a0a0a0"/><rect x="2" y="3" width="6" height="2" fill="#a0a0a0"/><path d="M2.4 6H7.6L5 8.4Z" fill="#a0a0a0"/></svg>
<div class="t" style="left:48.10px;top:697px;font-size:11px;font-weight:normal;letter-spacing:0.090px;color:#111;">Начальная дата расчета ПЛАНОВОЙ амортизации</div>
<div class="t" style="left:356px;top:697px;font-size:11px;color:#111">01.03.2018</div>
<div class="a" style="left:420px;top:354px;width:1px;height:360px;background:#e2e2e2"></div>
<div class="a" style="left:509px;top:354px;width:1px;height:360px;background:#e2e2e2"></div>
<div class="a" style="left:598px;top:354px;width:1px;height:360px;background:#e2e2e2"></div>
<div class="a" style="left:687px;top:354px;width:1px;height:360px;background:#e2e2e2"></div>
<div class="a" style="left:776px;top:354px;width:1px;height:360px;background:#e2e2e2"></div>
<div class="a" style="left:865px;top:354px;width:1px;height:360px;background:#e2e2e2"></div>
<div class="a" style="left:954px;top:354px;width:1px;height:360px;background:#e2e2e2"></div>
<div class="a" style="left:1043px;top:354px;width:1px;height:360px;background:#e2e2e2"></div>
<div class="a" style="left:1132px;top:354px;width:1px;height:360px;background:#e2e2e2"></div>
<div class="a" style="left:345px;top:247px;width:1px;height:467px;background:#a8a8a8"></div>
<div class="a" style="left:39px;top:689px;width:306px;height:1px;background:#a8a8a8"></div>
<div class="a" style="left:1155px;top:247px;width:16px;height:17px;background:#f2f2f2;border:1px solid #e0e0e0;border-radius:3px"></div>
<div class="a" style="left:1160px;top:254px;width:0;height:0;border-left:3px solid transparent;border-right:3px solid transparent;border-bottom:3px solid #888"></div>
<div class="a" style="left:1155px;top:265px;width:16px;height:409px;background:#fff;border:1px solid #e3e3e3;border-radius:3px"></div>
<div class="a" style="left:1160px;top:674px;width:7px;height:23px;background:#f0f0f0;border-left:1px solid #e0e0e0;border-right:1px solid #e0e0e0"></div>
<div class="a" style="left:1155px;top:696px;width:16px;height:18px;background:#fff;border:1px solid #e3e3e3;border-radius:3px"></div>
<div class="a" style="left:1160px;top:703px;width:0;height:0;border-left:3px solid transparent;border-right:3px solid transparent;border-top:3.5px solid #555"></div>
<div class="a" style="left:1156px;top:715px;width:15px;height:4px;background:#ddd"></div>
<div class="a" style="left:1155px;top:719px;width:16px;height:11px;background:#fff;border:1px solid #e3e3e3;border-radius:3px"></div>
<div class="a" style="left:4px;top:714px;width:17px;height:17px;background:#f2f2f2;border:1px solid #e0e0e0;border-radius:3px"></div>
<div class="a" style="left:10px;top:719px;width:0;height:0;border-top:3.5px solid transparent;border-bottom:3.5px solid transparent;border-right:4px solid #888"></div>
<div class="a" style="left:22px;top:714px;width:383px;height:17px;background:#fff;border:1px solid #e3e3e3;border-radius:3px"></div>
<div class="a" style="left:405px;top:719px;width:733px;height:8px;background:#f0f0f0;border-top:1px solid #e0e0e0;border-bottom:1px solid #e0e0e0"></div>
<div class="a" style="left:1137px;top:714px;width:17px;height:17px;background:#fff;border:1px solid #e3e3e3;border-radius:3px"></div>
<div class="a" style="left:1145px;top:719px;width:0;height:0;border-top:3.5px solid transparent;border-bottom:3.5px solid transparent;border-left:4px solid #666"></div></body></html>
